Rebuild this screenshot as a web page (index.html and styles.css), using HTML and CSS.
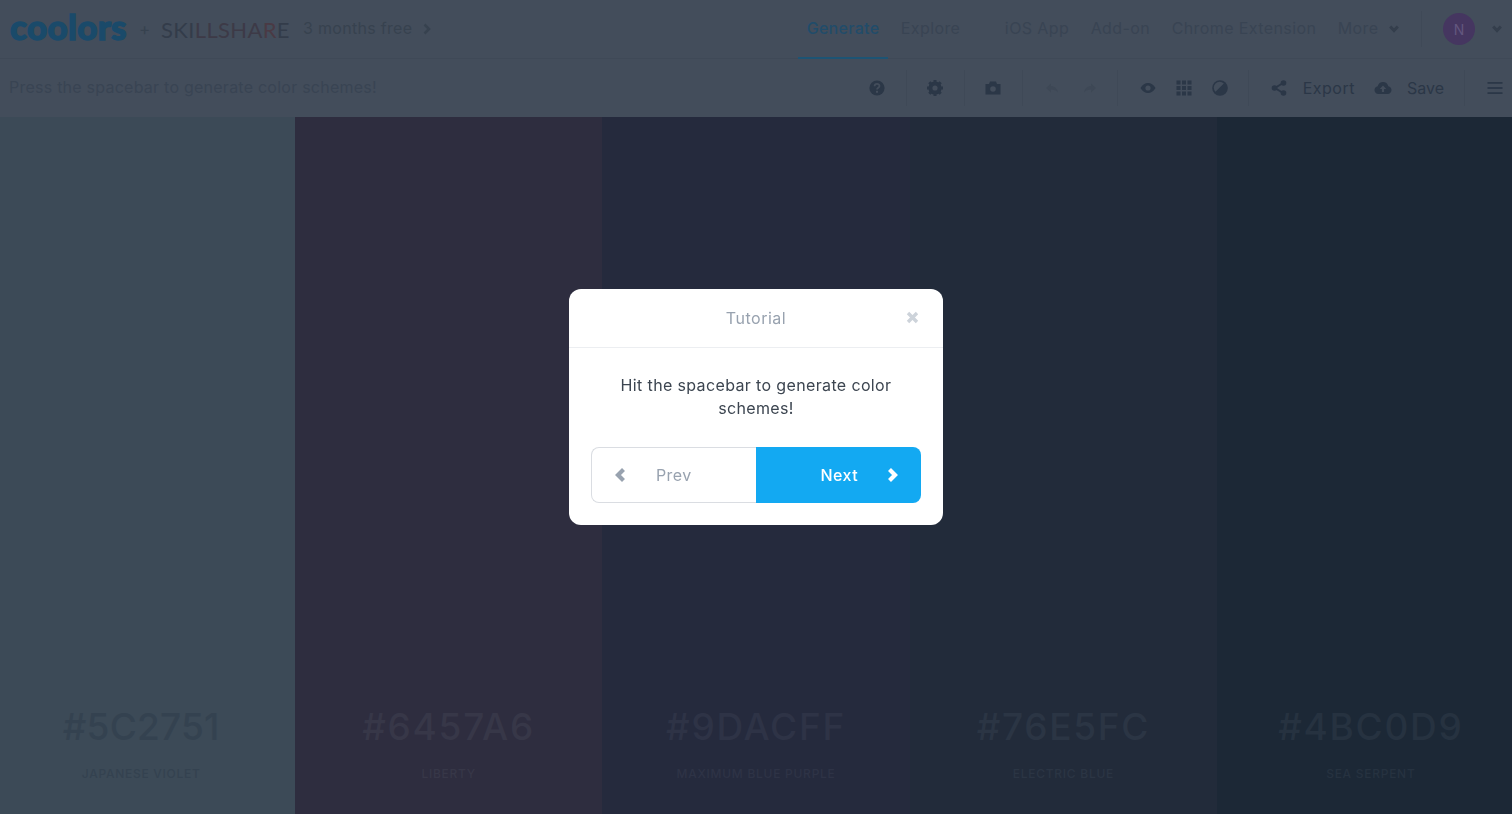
FILE: index.html
```html
<!DOCTYPE html>
<html lang="en">
<head>
    <meta charset="UTF-8">
    <title>Coolors - Generate</title>
    <link rel="stylesheet" href="styles.css">
</head>
<body>
    <div class="page">
        <div class="topbar">
            <span class="logo">coolors</span>
            <span class="plus">+</span>
            <span class="skillshare">SKI<span class="skill-warm">LLSHA</span><span class="skill-red">R</span>E</span>
            <span class="promo">3 months free</span>
            <svg class="promo-arrow" width="8" height="12" viewBox="0 0 8 12"><path d="M1.500 1.500 6 6l-4.500 4.500" fill="none" stroke="currentColor" stroke-width="2.600"/></svg>
            <div class="nav">
                <a class="nav-item active">Generate</a>
                <a class="nav-item nav-wide">Explore</a>
                <a class="nav-item">iOS App</a>
                <a class="nav-item">Add-on</a>
                <a class="nav-item">Chrome Extension</a>
                <a class="nav-item">More</a>
                <svg class="caret" width="10" height="8" viewBox="0 0 10 8"><path d="M1.200 1.500 5 5.500l3.800-4" fill="none" stroke="currentColor" stroke-width="3"/></svg>
            </div>
            <div class="account">
                <span class="avatar">N</span>
                <svg class="caret" width="10" height="8" viewBox="0 0 10 8"><path d="M1.200 1.500 5 5.500l3.800-4" fill="none" stroke="currentColor" stroke-width="3"/></svg>
            </div>
        </div>

        <div class="toolbar">
            <span class="hint">Press the spacebar to generate color schemes!</span>
            <div class="tools">
                <div class="tool-group">
                    <svg class="icon" viewBox="0 0 18 18"><circle cx="9" cy="9" r="7.600" fill="currentColor"/><path d="M6.600 7.200c0-3 4.900-3 4.900-.2 0 1.800-2.500 1.800-2.500 3.500" fill="none" stroke="#434d5b" stroke-width="1.800"/><rect x="8" y="11.800" width="2" height="2" fill="#434d5b"/></svg>
                </div>
                <div class="tool-group">
                    <svg class="icon" viewBox="0 0 18 18"><circle cx="9" cy="9" r="4.600" fill="none" stroke="currentColor" stroke-width="4"/><g stroke="currentColor" stroke-width="3"><path d="M9 1v3M9 14v3M1 9h3M14 9h3M3.300 3.300l2.100 2.100M12.600 12.600l2.100 2.100M14.700 3.300l-2.100 2.100M5.400 12.600l-2.100 2.100"/></g></svg>
                </div>
                <div class="tool-group">
                    <svg class="icon" viewBox="0 0 18 18"><path d="M1.500 5H5l1-2.500h6L13 5h3.500v10.500h-15z" fill="currentColor"/><circle cx="9" cy="10" r="2.800" fill="#434d5b"/></svg>
                </div>
                <div class="tool-group tool-faint">
                    <svg class="icon" viewBox="0 0 18 18"><path d="M8 4.500 3 9l5 4.500v-3c3 0 5 .7 7 3-.5-3.500-3-6-7-6.500z" fill="currentColor"/></svg>
                    <svg class="icon" viewBox="0 0 18 18"><path d="M10 4.500 15 9l-5 4.500v-3c-3 0-5 .7-7 3 .5-3.500 3-6 7-6.500z" fill="currentColor"/></svg>
                </div>
                <div class="tool-group tool-view">
                    <svg class="icon" viewBox="0 0 18 18"><path d="M1.500 9C3.500 5.600 6 4 9 4s5.500 1.600 7.500 5c-2 3.400-4.500 5-7.500 5s-5.500-1.600-7.500-5z" fill="currentColor"/><circle cx="9" cy="9" r="2.600" fill="#434d5b"/></svg>
                    <svg class="icon" viewBox="0 0 18 18" fill="currentColor"><rect x="1.500" y="1.500" width="4" height="4"/><rect x="7" y="1.500" width="4" height="4"/><rect x="12.500" y="1.500" width="4" height="4"/><rect x="1.500" y="7" width="4" height="4"/><rect x="7" y="7" width="4" height="4"/><rect x="12.500" y="7" width="4" height="4"/><rect x="1.500" y="12.500" width="4" height="4"/><rect x="7" y="12.500" width="4" height="4"/><rect x="12.500" y="12.500" width="4" height="4"/></svg>
                    <svg class="icon" viewBox="0 0 18 18"><circle cx="9" cy="9" r="7.800" fill="currentColor"/><path d="M12.800 4.400a5.700 5.700 0 0 0-8.300 8.300z" fill="#434d5b"/></svg>
                </div>
                <div class="tool-group tool-actions">
                    <svg class="icon" viewBox="0 0 18 18"><path d="M13 4 5 9l8 5" fill="none" stroke="currentColor" stroke-width="2"/><circle cx="13.500" cy="4" r="2.800" fill="currentColor"/><circle cx="4.500" cy="9" r="2.800" fill="currentColor"/><circle cx="13.500" cy="14" r="2.800" fill="currentColor"/></svg>
                    <span class="tool-label label-export">Export</span>
                    <svg class="icon icon-cloud" viewBox="0 0 18 18"><path d="M4.500 15C2 15 .5 13.200.5 11c0-2 1.300-3.500 3.200-3.800C4.300 4.600 6.400 3 9 3s4.700 1.600 5.300 4.200c1.900.3 3.200 1.800 3.200 3.800 0 2.200-1.500 4-4 4z" fill="currentColor"/><path d="M9 6.500 5.800 10h2.100v3h2.200v-3h2.100z" fill="#434d5b"/></svg>
                    <span class="tool-label">Save</span>
                </div>
                <div class="tool-group tool-last">
                    <svg class="icon" viewBox="0 0 18 18" fill="currentColor"><rect x="1.500" y="3" width="15" height="1.800"/><rect x="1.500" y="8.100" width="15" height="1.800"/><rect x="1.500" y="13.200" width="15" height="1.800"/></svg>
                </div>
            </div>
        </div>

        <div class="colors">
            <div class="color col-1"><div class="hex">#5C2751</div><div class="name">JAPANESE VIOLET</div></div>
            <div class="color col-2"><div class="hex">#6457A6</div><div class="name">LIBERTY</div></div>
            <div class="color col-3"><div class="hex">#9DACFF</div><div class="name">MAXIMUM BLUE PURPLE</div></div>
            <div class="color col-4"><div class="hex">#76E5FC</div><div class="name">ELECTRIC BLUE</div></div>
            <div class="color col-5"><div class="hex">#4BC0D9</div><div class="name">SEA SERPENT</div></div>
        </div>
    </div>

    <div class="overlay">
        <div class="modal">
            <div class="modal-header">
                Tutorial
                <svg class="modal-close" width="13" height="13" viewBox="0 0 13 13"><path d="M2 2l9 9m0-9-9 9" fill="none" stroke="currentColor" stroke-width="3.400"/></svg>
            </div>
            <div class="modal-body">
                <p class="modal-text">Hit the spacebar to generate color schemes!</p>
                <div class="modal-buttons">
                    <button class="btn btn-prev" type="button">
                        <svg width="12" height="16" viewBox="0 0 12 16"><path d="M9.500 2.500 4 8l5.500 5.500" fill="none" stroke="currentColor" stroke-width="4.200"/></svg>
                        <span>Prev</span>
                    </button>
                    <button class="btn btn-next" type="button">
                        <span>Next</span>
                        <svg width="12" height="16" viewBox="0 0 12 16"><path d="M2.500 2.500 8 8l-5.500 5.500" fill="none" stroke="currentColor" stroke-width="4.200"/></svg>
                    </button>
                </div>
            </div>
        </div>
    </div>
</body>
</html>
```

FILE: styles.css
```css
* {
    box-sizing: border-box;
}
html, body {
    height: 100%;
}
body {
    margin: 0;
    overflow: hidden;
    background-color: #434d5b;
    font-family: Inter, "Open Sans", Arial, sans-serif;
    color: #323f4f;
}
.page {
    display: flex;
    flex-direction: column;
    height: 100%;
}

/* top bar */
.topbar {
    display: flex;
    align-items: center;
    flex: 0 0 59px;
    padding-left: 10px;
    border-bottom: 1px solid #3f4957;
}
.logo {
    width: 117px;
    font-family: Lato, Arial, sans-serif;
    font-size: 35px;
    font-weight: 900;
    letter-spacing: 0.3px;
    line-height: 30px;
    color: #1a4a6a;
    -webkit-text-stroke: 1.4px #1a4a6a;
    position: relative;
    top: -3px;
}
.plus {
    margin-left: 12px;
    width: 22px;
    font-size: 17px;
    color: #37424f;
}
.skillshare {
    width: 128px;
    font-family: Lato, Arial, sans-serif;
    font-size: 22px;
    letter-spacing: 0.35px;
    color: #333c4a;
}
.skill-warm {
    color: #3d3a47;
}
.skill-red {
    color: #4a3a44;
}
.promo {
    margin-left: 14px;
    padding-bottom: 2px;
    font-size: 16px;
    letter-spacing: 0.3px;
    color: #37424f;
}
.promo-arrow {
    margin-left: 11px;
    color: #37424f;
}
.nav {
    display: flex;
    align-items: center;
    gap: 21.5px;
    align-self: stretch;
    margin-left: auto;
    color: #394453;
}
.nav-item {
    position: relative;
    display: flex;
    align-items: center;
    align-self: stretch;
    padding-bottom: 2px;
    font-size: 16px;
    letter-spacing: 0.4px;
}
.nav-item.active {
    color: #214c6a;
    font-weight: 500;
    letter-spacing: 0.3px;
}
.nav-item.active::after {
    content: "";
    position: absolute;
    left: -9px;
    right: -9px;
    bottom: -1px;
    height: 2px;
    background-color: #1d5474;
}
.nav-wide {
    margin-right: 23px;
}
.caret {
    color: #343e4c;
}
.nav .caret {
    margin-left: -11px;
}
.account .caret {
    margin-left: -6px;
}
.account {
    display: flex;
    align-items: center;
    margin-left: 22px;
    padding-left: 21px;
    padding-right: 10px;
    height: 36px;
    border-left: 1px solid #3f4957;
}
.avatar {
    display: flex;
    align-items: center;
    justify-content: center;
    width: 32px;
    height: 32px;
    margin-right: 23px;
    border-radius: 50%;
    background-color: #453660;
    font-size: 14px;
    color: #63567e;
}

/* toolbar */
.toolbar {
    display: flex;
    align-items: center;
    justify-content: space-between;
    flex: 0 0 58px;
    padding-left: 9px;
}
.hint {
    padding-bottom: 2px;
    font-size: 16px;
    letter-spacing: 0.24px;
    color: #394453;
}
.tools {
    display: flex;
    align-items: center;
    height: 36px;
    color: #2b3747;
}
.tool-group {
    display: flex;
    align-items: center;
    gap: 18px;
    height: 100%;
    padding: 0 20px 0 19px;
    border-right: 1px solid #3f4957;
}
.tool-faint {
    gap: 20px;
    padding: 0 18px 0 20px;
    color: #3e4856;
}
.tool-view {
    padding: 0 19px 0 21px;
}
.tool-actions {
    gap: 15px;
    padding: 0 20px 0 21px;
}
.tool-last {
    padding: 0 8px 0 21px;
    border-right: none;
}
.icon {
    display: block;
    flex: 0 0 18px;
    width: 18px;
    height: 18px;
}
.icon-cloud {
    margin-left: 4px;
}
.tool-label {
    font-size: 16px;
    letter-spacing: 0;
}
.label-export {
    letter-spacing: 0.5px;
}

/* colour columns */
.colors {
    display: flex;
    flex: 1;
    margin: 0 -12.5px;
}
.color {
    display: flex;
    flex: 1;
    flex-direction: column;
    align-items: center;
    justify-content: flex-end;
    padding-bottom: 32px;
}
.hex {
    font-size: 37px;
    font-weight: 500;
    letter-spacing: 1.7px;
    line-height: 44px;
}
.name {
    margin-top: 17px;
    font-size: 12px;
    font-weight: 500;
    letter-spacing: 0.73px;
    line-height: 16px;
}
.col-1 { background-color: #3c4a57; color: #344250; }
.col-2 { background-color: #2e2d3f; color: #373748; }
.col-3 { background-color: #252a3d; color: #2e3346; }
.col-4 { background-color: #222b3a; color: #2b3544; }
.col-5 { background-color: #1c2836; color: #263240; }
.col-1 .hex { letter-spacing: 0.2px; }

/* tutorial */
.overlay {
    position: fixed;
    inset: 0;
    display: flex;
    align-items: center;
    justify-content: center;
}
.modal {
    width: 374px;
    background-color: white;
    border-radius: 12px;
    overflow: hidden;
}
.modal-header {
    position: relative;
    height: 59px;
    border-bottom: 1px solid #eceef1;
    font-size: 16px;
    letter-spacing: 0.5px;
    line-height: 58px;
    text-align: center;
    color: #98a2af;
}
.modal-close {
    position: absolute;
    top: 22px;
    right: 24px;
    color: #cdd3da;
}
.modal-body {
    padding: 26px 22px 22px;
}
.modal-text {
    margin: 0 20px 27px;
    font-size: 16px;
    letter-spacing: 0.36px;
    line-height: 23px;
    text-align: center;
    color: #3c4550;
}
.modal-buttons {
    display: flex;
    height: 56px;
}
.btn {
    display: flex;
    flex: 0 0 50%;
    align-items: center;
    padding: 0 22px;
    border: none;
    font-family: inherit;
    font-size: 16px;
    letter-spacing: 0.4px;
}
.btn-prev {
    gap: 30px;
    background-color: white;
    border: 1px solid #dadde2;
    border-right: none;
    border-radius: 8px 0 0 8px;
    color: #98a2af;
}
.btn-next {
    justify-content: flex-end;
    gap: 29px;
    background-color: #13a9f2;
    border-radius: 0 8px 8px 0;
    font-weight: 500;
    color: white;
}
```
